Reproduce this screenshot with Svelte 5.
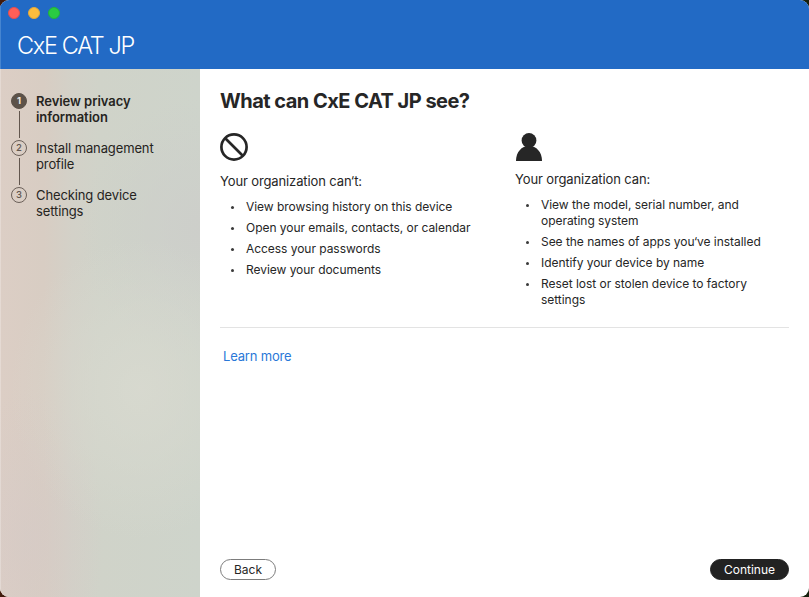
<script>
  const steps = [
    { lines: ['Review privacy', 'information'], active: true },
    { lines: ['Install management', 'profile'], active: false },
    { lines: ['Checking device', 'settings'], active: false }
  ];
  const cannot = [
    ['View browsing history on this device'],
    ['Open your emails, contacts, or calendar'],
    ['Access your passwords'],
    ['Review your documents']
  ];
  const can = [
    ['View the model, serial number, and', 'operating system'],
    ['See the names of apps you‘ve installed'],
    ['Identify your device by name'],
    ['Reset lost or stolen device to factory', 'settings']
  ];
</script>

{#snippet list(items)}
  <ul>
    {#each items as lines}
      <li>
        <span class="dot"></span>
        <div>{#each lines as line}<div class="line">{line}</div>{/each}</div>
      </li>
    {/each}
  </ul>
{/snippet}

<div class="desktop">
  <div class="window">
    <header>
      <div class="lights"><i class="red"></i><i class="yellow"></i><i class="green"></i></div>
      <div class="brand">CxE CAT JP</div>
    </header>
    <div class="body">
      <nav>
        {#each steps as step, i}
          <div class="step" class:active={step.active}>
            <div class="rail">
              <span class="num">{i + 1}</span>
              {#if i < steps.length - 1}<span class="link"></span>{/if}
            </div>
            <div class="label">{#each step.lines as line}<div class="line">{line}</div>{/each}</div>
          </div>
        {/each}
      </nav>
      <main>
        <h1>What can CxE CAT JP see?</h1>
        <div class="columns">
          <section class="left">
            <svg width="28" height="28" viewBox="0 0 28 28" fill="none" stroke="#262626" stroke-width="2.7">
              <circle cx="14" cy="14" r="12.6" />
              <path d="M5 5l18 18" />
            </svg>
            <p>Your organization can‘t:</p>
            {@render list(cannot)}
          </section>
          <section class="right">
            <svg width="28" height="28" viewBox="0 0 28 28" fill="#262626">
              <circle cx="14" cy="7.4" r="7.4" />
              <path d="M1 28C1 19 6.500 13 14 13s13 6 13 15z" />
            </svg>
            <p>Your organization can:</p>
            {@render list(can)}
          </section>
        </div>
        <a href="#learn">Learn more</a>
        <footer>
          <button class="back">Back</button>
          <button class="continue">Continue</button>
        </footer>
      </main>
    </div>
  </div>
</div>

<style>
  * { box-sizing: border-box; }
  .desktop {
    width: 809px; height: 597px; overflow: hidden;
    background: linear-gradient(90deg, #421b0d 0 50%, #15200c 50%);
    font-family: Inter, "Liberation Sans", sans-serif;
    color: #262626;
  }
  .window { height: 597px; display: flex; flex-direction: column; border-radius: 9px; overflow: hidden; background: #fff; }
  header { height: 69px; flex: none; background: #226ac5; padding: 7px 8px 0; box-shadow: inset 1px 0 #4685d0; }
  .lights { display: flex; gap: 8px; }
  .lights i { width: 12px; height: 12px; border-radius: 50%; border: 1px solid var(--ring); }
  .red { background: #ff5f57; --ring: #e54e50; }
  .yellow { background: #fdbd3e; --ring: #e4a93a; }
  .green { background: #2acb42; --ring: #22b13a; }
  .brand { margin: 12px 0 0 9px; font-size: 23.5px; line-height: 30px; font-weight: 300; letter-spacing: -1.35px; color: #fff; white-space: nowrap; }
  .body { flex: 1; display: flex; min-height: 0; }
  nav {
    width: 200px; flex: none; padding: 24px 0 0 11px;
    background:
      radial-gradient(ellipse 130px 150px at 140px 320px, rgba(217, 218, 208, .8) 0%, rgba(217, 218, 208, .45) 45%, rgba(217, 218, 208, 0) 100%),
      radial-gradient(ellipse 120px 130px at 200px 160px, rgba(205, 206, 202, .9) 0%, rgba(205, 206, 202, 0) 100%),
      radial-gradient(ellipse 75px 150px at 30px 470px, rgba(212, 201, 199, .5) 0%, rgba(212, 201, 199, 0) 100%),
      linear-gradient(90deg, #dccec5 0%, #d8cdc3 22%, #d3d1c8 36%, #d0d3c9 50%, #ced4cb 100%);
    box-shadow: inset 1px 0 rgba(255, 255, 255, .25);
    color: #26241e;
  }
  .step { display: flex; height: 47px; }
  .rail { width: 16px; display: flex; flex-direction: column; align-items: center; }
  .num { width: 16px; height: 16px; border: 1.3px solid #6b6059; border-radius: 50%; font-size: 9.5px; line-height: 14px; text-align: center; color: #61574f; font-weight: 500; }
  .active .num { background: #5c5249; border-color: #5c5249; color: #eee6df; font-weight: 700; }
  .link { width: 1px; height: 27px; margin-top: 2px; background: #62564e; }
  .label { margin-left: 9px; font-size: 13px; line-height: 16px; white-space: nowrap; letter-spacing: -.12px; }
  .active .label { font-weight: 600; letter-spacing: -.05px; }
  main { flex: 1; display: flex; flex-direction: column; padding: 19px 20px 17px; }
  h1 { margin: 0; font-size: 20px; line-height: 26px; font-weight: 700; letter-spacing: -.52px; white-space: nowrap; }
  .columns { display: flex; margin-top: 19px; height: 195px; border-bottom: 1px solid #e3e3e3; flex: none; }
  section { width: 295px; flex: none; }
  .right { width: 274px; }
  svg { display: block; }
  .left p { margin-top: 11px; }
  p { margin: 9px 0 0; font-size: 13px; line-height: 18px; letter-spacing: -.12px; white-space: nowrap; }
  ul { list-style: none; margin: 9px 0 0; padding: 0; display: flex; flex-direction: column; gap: 5px; }
  li { display: flex; font-size: 12px; line-height: 16px; letter-spacing: -.04px; white-space: nowrap; }
  .dot { width: 3px; height: 3px; border-radius: 50%; background: #3a3a3a; margin: 7px 12px 0 11px; flex: none; }
  a { margin: 19px 0 0 3px; font-size: 13px; line-height: 18px; letter-spacing: -.18px; color: #2a78d8; text-decoration: none; align-self: flex-start; }
  footer { margin-top: auto; display: flex; justify-content: space-between; }
  button { height: 21px; border-radius: 11px; padding: 0; font: 400 12px/19px Inter, "Liberation Sans", sans-serif; }
  .back { width: 56px; background: #fff; color: #262626; border: 1px solid #7c7c7c; }
  .continue { width: 79px; background: #222; color: #fff; border: 1px solid #222; }
</style>
